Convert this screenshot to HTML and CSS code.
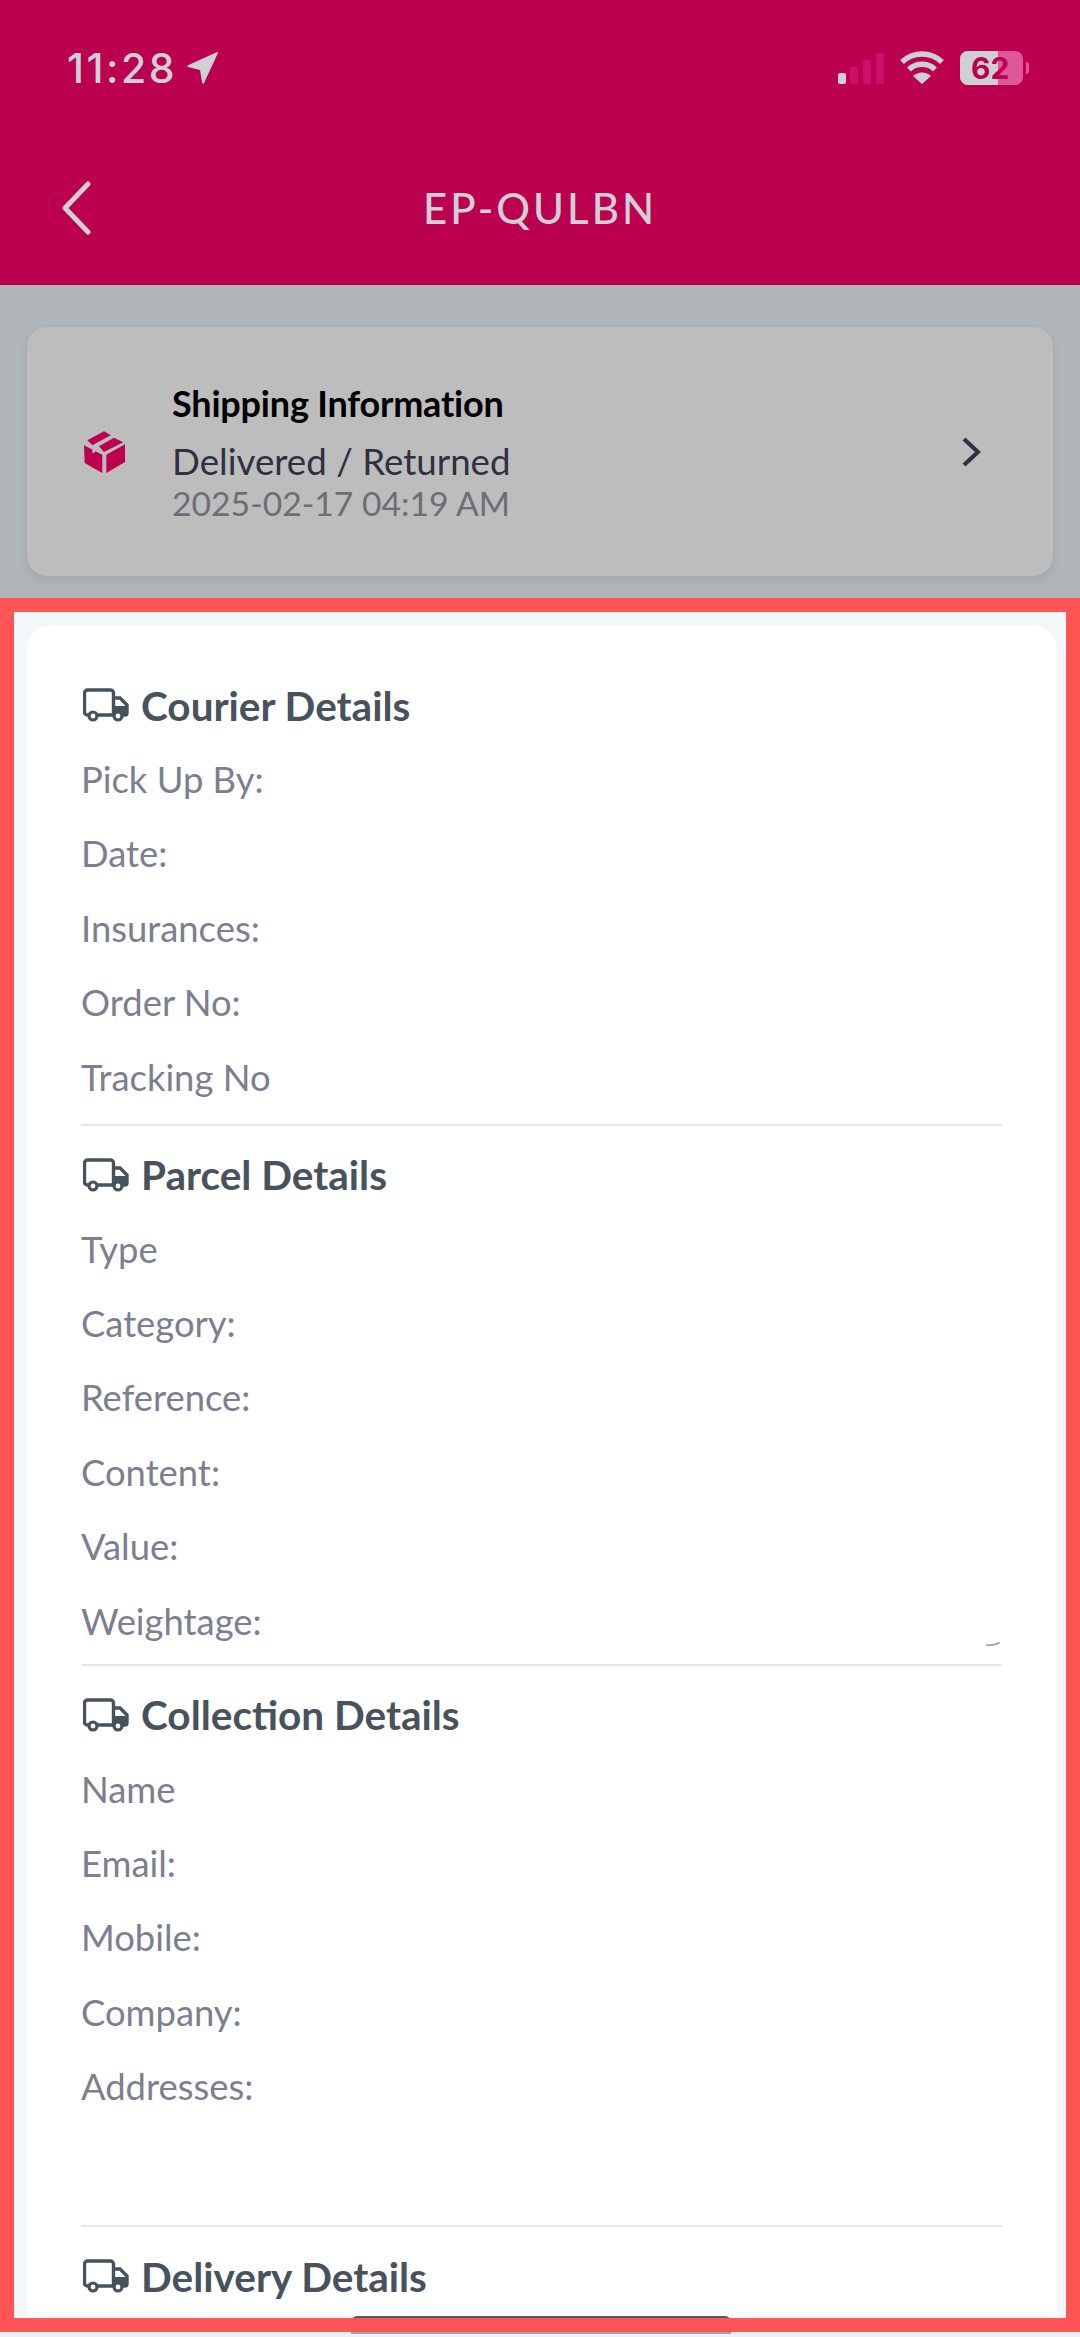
FILE: index.html
```html
<!DOCTYPE html>
<html lang="en">
<head>
    <meta charset="UTF-8">
    <meta name="viewport" content="width=device-width, initial-scale=1.0">
    <title>EP-QULBN</title>
    <link rel="stylesheet" href="styles.css">
</head>
<body>
    <svg class="defs" width="0" height="0">
        <symbol id="truck" viewBox="0 0 46 34">
            <path d="M6 27H4.500a3 3 0 0 1-3-3V5a3 3 0 0 1 3-3h23a3 3 0 0 1 3 3v22H15" fill="none" stroke="currentColor" stroke-width="3.400"/>
            <path d="M31 10h6l7 7v8a2 2 0 0 1-2 2h-2M30 27h0" fill="none" stroke="currentColor" stroke-width="3.400"/>
            <path d="M30 18h15v9H30z" fill="currentColor"/>
            <circle cx="10" cy="28" r="4" fill="#fff" stroke="currentColor" stroke-width="3.200"/>
            <circle cx="35" cy="28" r="4" fill="#fff" stroke="currentColor" stroke-width="3.200"/>
        </symbol>
    </svg>

    <header class="topbar">
        <div class="status">
            <div class="time">11:28
                <svg class="arrow" width="32" height="32" viewBox="0 0 32 32"><path d="M31 1 17 31c-.5 1-1.500 1-1.800 0L13 18 1 15c-1-.3-1-1.300 0-1.800L29 .5c1.500-.7 2.500-.2 2 .5z" fill="#cfd0d6"/></svg>
            </div>
            <div class="status-icons">
                <svg width="48" height="32" viewBox="0 0 48 32">
                    <rect x="1" y="21" width="8" height="11" rx="2" fill="#cfd0d6"/>
                    <rect x="13" y="15" width="8" height="17" rx="1.500" fill="#cd0f6c"/>
                    <rect x="26" y="8" width="8" height="24" rx="1.500" fill="#cd0f6c"/>
                    <rect x="39" y="1" width="8" height="31" rx="1.500" fill="#cd0f6c"/>
                </svg>
                <svg class="wifi" width="44" height="34" viewBox="0 0 44 34">
                    <path d="M2 11a29 29 0 0 1 40 0M9 18.500a19 19 0 0 1 26 0" fill="none" stroke="#cfd0d6" stroke-width="5.500"/>
                    <path d="M22 33 13 25a13 13 0 0 1 18 0z" fill="#cfd0d6"/>
                </svg>
                <div class="battery"><div class="battery-level"></div><span>62</span></div>
                <div class="battery-cap"></div>
            </div>
        </div>
        <nav class="navbar">
            <svg class="back" width="32" height="54" viewBox="0 0 32 54"><path d="M28 3 5 27l23 24" fill="none" stroke="#cfd0d6" stroke-width="5" stroke-linecap="round" stroke-linejoin="round"/></svg>
            <h1>EP-QULBN</h1>
        </nav>
    </header>

    <section class="shipping-wrap">
        <div class="shipping-card">
            <svg class="box" width="42" height="42" viewBox="0 0 42 42">
                <path d="M0 14.300 8.300 18.500V22L11 21.500V20L18.300 23.700V42L.7 32z" fill="#bd0050"/>
                <path d="M22.300 23.700 41 13.300V31L22.300 42z" fill="#bd0050"/>
                <path d="M3.300 9.300 20 .3l6.700 4L8.300 14.300z" fill="#bd0050"/>
                <path d="M15 15.300 30 6.700l9.300 4.600L20 21z" fill="#bd0050"/>
            </svg>
            <div class="shipping-text">
                <div class="shipping-title">Shipping Information</div>
                <div class="shipping-status">Delivered / Returned</div>
                <div class="shipping-date">2025-02-17 04:19 AM</div>
            </div>
            <svg class="chevron" width="20" height="30" viewBox="0 0 20 30"><path d="M3 2l14 13L3 28" fill="none" stroke="#30303f" stroke-width="4.200"/></svg>
        </div>
    </section>

    <main class="sheet">
        <div class="details-card">
            <section class="group group-first">
                <h2><svg class="truck"><use href="#truck"/></svg>Courier Details</h2>
                <div class="row">Pick Up By:</div>
                <div class="row">Date:</div>
                <div class="row">Insurances:</div>
                <div class="row">Order No:</div>
                <div class="row">Tracking No</div>
            </section>
            <section class="group group-parcel">
                <h2><svg class="truck"><use href="#truck"/></svg>Parcel Details</h2>
                <div class="row">Type</div>
                <div class="row">Category:</div>
                <div class="row">Reference:</div>
                <div class="row">Content:</div>
                <div class="row">Value:</div>
                <div class="row">Weightage:<svg class="smudge" width="14" height="4" viewBox="0 0 14 4"><path d="M0 3c5 .5 10 0 14-3" fill="none" stroke="#9a9ca4" stroke-width="1.500"/></svg></div>
            </section>
            <section class="group">
                <h2><svg class="truck"><use href="#truck"/></svg>Collection Details</h2>
                <div class="row">Name</div>
                <div class="row">Email:</div>
                <div class="row">Mobile:</div>
                <div class="row">Company:</div>
                <div class="row row-address">Addresses:</div>
            </section>
            <section class="group">
                <h2><svg class="truck"><use href="#truck"/></svg>Delivery Details</h2>
            </section>
        </div>
    </main>
    <div class="home-bar"></div>
</body>
</html>
```

FILE: styles.css
```css
html, body { margin: 0; padding: 0; }
body { position: relative; width: 1080px; height: 2337px; overflow: hidden; background: #eef1f3; font-family: Lato, Arial, sans-serif; }
.defs { position: absolute; }

.topbar { height: 285px; background: #bb004f; color: #cfd0d6; box-sizing: border-box; }
.status { display: flex; justify-content: space-between; align-items: center; height: 70px; padding: 33px 51px 0 67px; }
.time { display: flex; align-items: center; gap: 10px; font-family: Inter, Arial, sans-serif; font-size: 41px; font-weight: 500; letter-spacing: 2.500px; }
.status-icons { display: flex; align-items: center; }
.wifi { margin-left: 15px; }
.battery { position: relative; width: 63px; height: 34px; margin-left: 16px; border-radius: 8px; background: #e0569a; overflow: hidden; }
.battery-level { width: 38px; height: 34px; background: #cfd0d6; }
.battery span { position: absolute; left: 11px; top: 0; line-height: 34px; font-family: Inter, Arial, sans-serif; font-size: 30px; font-weight: 700; color: #bb004f; }
.battery-cap { width: 3px; height: 12px; margin-left: 3px; border-radius: 0 3px 3px 0; background: #e0569a; }

.navbar { position: relative; display: flex; justify-content: center; align-items: center; height: 70px; margin-top: 70px; }
.navbar .back { position: absolute; left: 60px; top: 8px; }
.navbar h1 { margin: 0; font-family: Lato, Arial, sans-serif; font-size: 42px; font-weight: 500; letter-spacing: 3px; color: #cfd0d6; }

.shipping-wrap { height: 313px; padding: 42px 27px 0; box-sizing: border-box; background: #b0b5b9; }
.shipping-card { display: flex; align-items: center; height: 249px; padding: 0 72px 0 57px; box-sizing: border-box; border-radius: 20px; background: #bdbdbd; box-shadow: 0 4px 10px rgba(0,0,0,0.08); }
.shipping-text { flex: 1; margin: 0 0 2px 46px; }
.shipping-title { font-size: 36px; font-weight: 700; line-height: 46px; color: #000; letter-spacing: -0.2px; }
.shipping-status { font-size: 36.700px; line-height: 42px; margin-top: 14px; color: #30303f; }
.shipping-date { font-size: 33.700px; line-height: 38px; margin-top: 2px; color: #6d6d75; }

.sheet { height: 1734px; box-sizing: border-box; border: 14px solid #ff5555; background: #f3f7fa; padding: 13px 9px 0 13px; overflow: hidden; }
.details-card { height: 1800px; padding: 0 55px 0 54px; background: #fff; border-radius: 24px; }
.group { border-top: 2px solid #e6e6e6; padding-top: 25px; }
.group-first { border-top: 0; padding-top: 56px; }
.group h2 { display: flex; align-items: center; gap: 12px; height: 48px; margin: 0 0 27px; font-size: 40.500px; font-weight: 700; color: #48525c; }
.truck { width: 46px; height: 34px; margin-left: 2px; color: #48525c; }
.row { display: flex; justify-content: space-between; height: 74.400px; font-size: 36.400px; line-height: 46px; color: #7b7f8f; }
.row:last-child { height: 68px; }
.group-first .row:last-child { height: 70px; }
.group-parcel .row:last-child { height: 66px; }
.row-address:last-child { height: 162px; }
.smudge { margin: 44px 2px 0 0; }

.home-bar { position: absolute; left: 351px; top: 2316px; width: 380px; height: 18px; border-radius: 6px 6px 0 0; background: linear-gradient(#55585c 0 2px, #ff5555 2px 16px, #a0a2a6 16px); }
```
